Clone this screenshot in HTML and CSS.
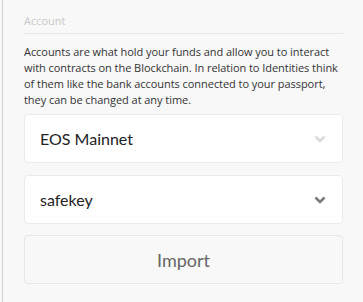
FILE: index.html
```html
<!DOCTYPE html>
<html lang="en">
<head>
  <meta charset="UTF-8">
  <title>Account</title>
  <meta name="viewport" content="width=device-width, initial-scale=1">
  <link rel="stylesheet" href="styles.css">
</head>
<body>

<div class="panel">
  <div class="section-title">Account</div>
  <p class="description">
    Accounts are what hold your funds and allow you to interact with contracts on the Blockchain. In relation to Identities think of them like the bank accounts connected to your passport, they can be changed at any time.
  </p>

  <!-- Network -->
  <div class="select disabled">
    <span class="select-label">EOS Mainnet</span>
    <svg class="chevron" width="12" height="8" viewBox="0 0 12 8"><polyline points="1.5,1.5 6,6 10.5,1.5" fill="none" stroke="currentColor" stroke-width="2.6"/></svg>
  </div>

  <!-- Key -->
  <div class="select">
    <span class="select-label">safekey</span>
    <svg class="chevron" width="12" height="8" viewBox="0 0 12 8"><polyline points="1.5,1.5 6,6 10.5,1.5" fill="none" stroke="currentColor" stroke-width="2.6"/></svg>
  </div>

  <button class="import-btn">Import</button>
</div>

</body>
</html>
```

FILE: styles.css
```css
* { box-sizing: border-box; margin: 0; padding: 0; }
html, body {
  height: 100%;
}
body {
  background: #f8f8f8;
  font-family: 'Open Sans', sans-serif;
  overflow: hidden;
}

.panel {
  margin-left: 2px;
  min-height: 100%;
  border-left: 1px solid #d4d4d4;
  padding: 13px 20px 0 21px;
}

.section-title {
  font-size: 11px;
  line-height: 16px;
  color: #c8c8c8;
  padding-bottom: 4px;
  border-bottom: 1px solid #e6e6e6;
}

.description {
  margin-top: 10px;
  font-size: 11px;
  letter-spacing: -0.05px;
  line-height: 16px;
  color: #333;
}

.select {
  display: flex;
  align-items: center;
  justify-content: space-between;
  height: 49px;
  margin-top: 6px;
  padding: 0 16px 0 15px;
  background: #fff;
  border: 1px solid #ebebeb;
  border-radius: 4px;
  color: #7a7a7a;
}
.select + .select {
  margin-top: 12px;
}
.select.disabled {
  color: #dadada;
}

.select-label {
  font-family: 'Lato', sans-serif;
  font-size: 16px;
  color: #222;
}

.chevron {
  display: block;
}

.import-btn {
  display: block;
  width: 100%;
  height: 49px;
  margin-top: 11px;
  background: #f8f8f8;
  border: 1px solid #e6e6e6;
  border-radius: 4px;
  font-family: 'Lato', sans-serif;
  font-size: 18px;
  color: #666;
  cursor: pointer;
}
```
